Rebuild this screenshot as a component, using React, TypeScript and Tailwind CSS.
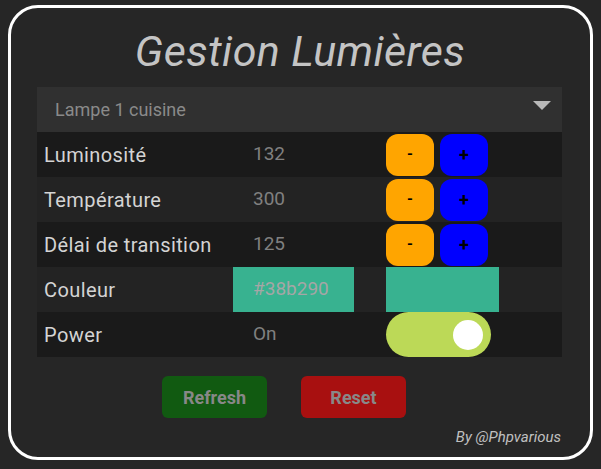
const rows = [
  { label: "Luminosité", value: "132" },
  { label: "Température", value: "300" },
  { label: "Délai de transition", value: "125" },
];

const StepButtons = () => (
  <div className="flex gap-[6px]">
    <button className="w-[48px] h-[42px] rounded-[12px] bg-[#ffa500] text-black text-[15px] font-bold leading-none">-</button>
    <button className="w-[48px] h-[42px] rounded-[12px] bg-[#0000ff] text-black text-[18px] font-bold leading-none">+</button>
  </div>
);

export default function App() {
  return (
    <div className="w-[601px] h-[469px] bg-[#262626] pt-[5px] pl-[8px] font-['Roboto',sans-serif]">
      <div className="w-[585px] h-[455px] border-[3px] border-white rounded-[30px] pl-[26px] pr-[28px] flex flex-col">
        <h1 className="text-center text-[#c4c4c4] italic text-[43px] leading-none mt-[22px] h-[57px] tracking-[0.4px] pl-[1px]">
          Gestion Lumières
        </h1>
        <div className="h-[45px] bg-[#303030] flex items-center justify-between pl-[18px] pr-[11px]">
          <span className="text-[#8a8a8a] text-[18px]">Lampe 1 cuisine</span>
          <svg width="18" height="9" viewBox="0 0 18 9" className="-mt-[9px]"><polygon points="0,0 18,0 9,9" fill="#b8b8b8" /></svg>
        </div>
        {rows.map((r, i) => (
          <div key={r.label} className={`h-[45px] flex items-center ${i % 2 === 0 ? "bg-[#1a1a1a]" : "bg-[#232323]"}`}>
            <div className="w-[196px] pl-[7px] text-[#d4d4d4] text-[20px] tracking-[0.4px]">{r.label}</div>
            <div className="w-[153px] pl-[20px] text-[#808080] text-[19px]">{r.value}</div>
            <StepButtons />
          </div>
        ))}
        <div className="h-[45px] flex items-stretch bg-[#232323]">
          <div className="w-[196px] pl-[7px] flex items-center text-[#d4d4d4] text-[20px] tracking-[0.4px]">Couleur</div>
          <div className="w-[121px] bg-[#38b290] pl-[20px] flex items-center text-[#a6a6a6] text-[19px]">#38b290</div>
          <div className="w-[32px]" />
          <div className="w-[113px] bg-[#38b290]" />
        </div>
        <div className="h-[45px] flex items-center bg-[#1a1a1a]">
          <div className="w-[196px] pl-[7px] text-[#d4d4d4] text-[20px] tracking-[0.4px]">Power</div>
          <div className="w-[153px] pl-[20px] text-[#808080] text-[19px]">On</div>
          <div className="w-[105px] h-[45px] rounded-full bg-[#bcd957] flex items-center justify-end pr-[8px]">
            <div className="w-[30px] h-[30px] rounded-full bg-white" />
          </div>
        </div>
        <div className="flex gap-[34px] mt-[19px] pl-[125px]">
          <button className="w-[105px] h-[42px] rounded-[6px] bg-[#115a11] text-[#888888] text-[18px] font-bold">Refresh</button>
          <button className="w-[105px] h-[42px] rounded-[6px] bg-[#a81010] text-[#888888] text-[18px] font-bold">Reset</button>
        </div>
        <div className="text-right italic text-[#c0c0c0] text-[15px] mt-[8px] pr-[1px]">By @Phpvarious</div>
      </div>
    </div>
  );
}
